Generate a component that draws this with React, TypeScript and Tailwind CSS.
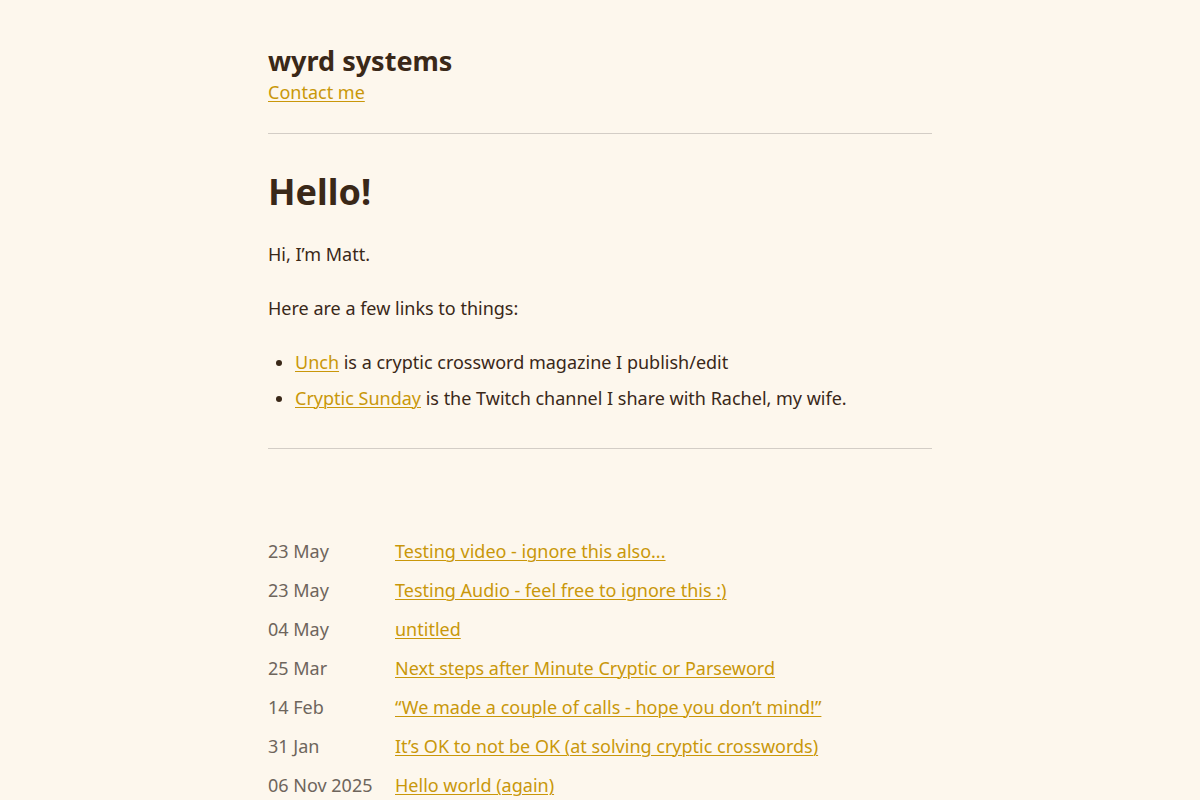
import React from "react";

const posts = [
  ["23 May", "Testing video - ignore this also..."],
  ["23 May", "Testing Audio - feel free to ignore this :)"],
  ["04 May", "untitled"],
  ["25 Mar", "Next steps after Minute Cryptic or Parseword"],
  ["14 Feb", "“We made a couple of calls - hope you don’t mind!”"],
  ["31 Jan", "It’s OK to not be OK (at solving cryptic crosswords)"],
  ["06 Nov 2025", "Hello world (again)"],
];

const link = "text-[#c9970a] underline decoration-1 underline-offset-2";

export default function App() {
  return (
    <div
      className="min-h-screen bg-[#fdf7ed] text-[#3a2818]"
      style={{ fontFamily: '"Noto Sans", sans-serif' }}
    >
      <div className="mx-auto w-[664px] pt-[41px]">
        <header className="pb-[30px]">
          <div className="text-[27px] font-bold leading-[40px]">wyrd systems</div>
          <a href="#" className={`${link} text-[18px] leading-[22px] block w-fit`}>
            Contact me
          </a>
        </header>
        <hr className="border-0 border-t border-[#d3cdc6]" />
        <main className="pt-[29px] text-[18px] leading-[27px]">
          <h1 className="text-[36px] font-bold leading-[56px] mt-[1px] mb-[21px]">Hello!</h1>
          <p className="mb-[27px]">Hi, I’m Matt.</p>
          <p className="mb-[27px]">Here are a few links to things:</p>
          <ul className="list-disc pl-[27px] flex flex-col gap-[9px]">
            <li>
              <a href="#" className={link}>Unch</a> is a cryptic crossword magazine I publish/edit
            </li>
            <li>
              <a href="#" className={link}>Cryptic Sunday</a> is the Twitch channel I share with Rachel, my wife.
            </li>
          </ul>
        </main>
        <hr className="mt-[36px] border-0 border-t border-[#d3cdc6]" />
        <section className="pt-[89px] text-[18px] leading-[27px] flex flex-col gap-[12px]">
          {posts.map(([d, t], i) => (
            <div key={i} className="flex">
              <span className="w-[127px] shrink-0 text-[#6e655c]">{d}</span>
              <a href="#" className={link}>{t}</a>
            </div>
          ))}
        </section>
      </div>
    </div>
  );
}
